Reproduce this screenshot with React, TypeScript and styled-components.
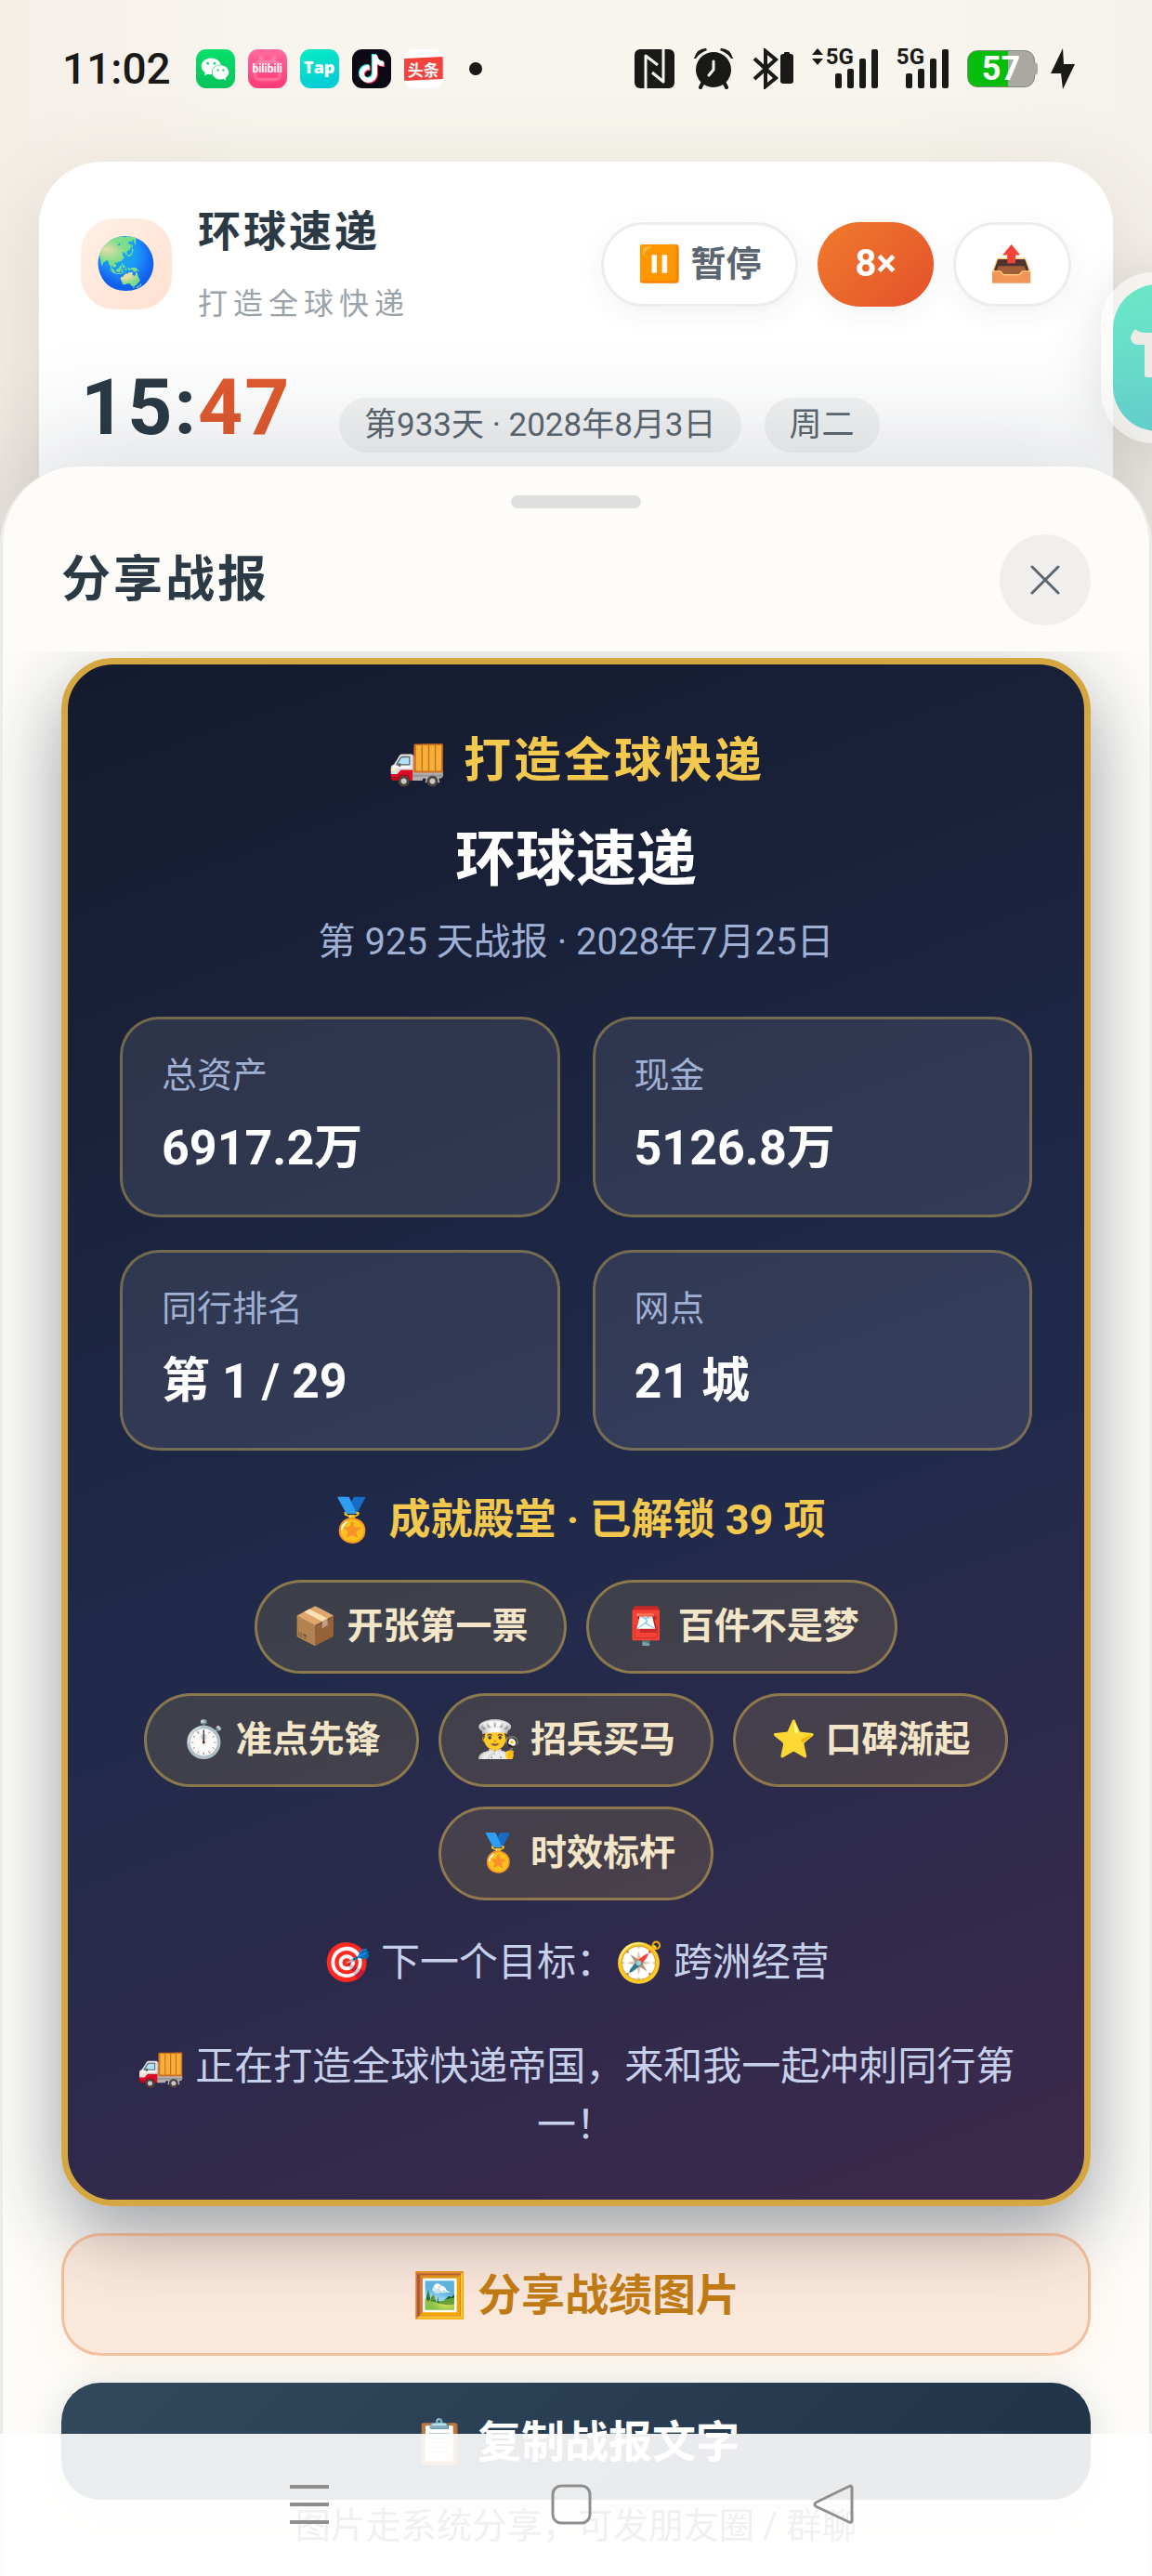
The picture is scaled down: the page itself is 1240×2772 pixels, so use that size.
import React from 'react';
import styled, { createGlobalStyle, css } from 'styled-components';
import { FaWeixin, FaTiktok } from 'react-icons/fa';
import { SiBilibili } from 'react-icons/si';

const Global = createGlobalStyle`
  *, *::before, *::after { box-sizing: border-box; }
  body {
    margin: 0;
    font-family: Roboto, "Noto Sans CJK SC", "Noto Color Emoji", sans-serif;
    color: #2b3a44;
    background: #f5f1ea;
  }
  h1, h2, h3, p, dl, dt, dd, ul { margin: 0; padding: 0; }
  button { font-family: inherit; margin: 0; cursor: pointer; }
`;

const Page = styled.div`
  position: relative;
  display: flex;
  flex-direction: column;
  min-height: 100vh;
  overflow: hidden;
  background: linear-gradient(90deg, #f5efe8 0, #f8f5ee 22%, #f8f5ee 78%, #f5f1eb 100%);
`;

/* ---------- status bar ---------- */

const StatusBar = styled.header`
  display: flex;
  align-items: center;
  justify-content: space-between;
  padding: 44px 83px 0 67px;
  height: 104px;
  flex: none;
  color: #191917;
`;

const StatusGroup = styled.div<{ $gap: number }>`
  display: flex;
  align-items: center;
  gap: ${(p) => p.$gap}px;
`;

const SystemTime = styled.time`
  font-size: 46px;
  font-weight: 500;
  line-height: 60px;
  margin-right: 13px;
`;

const AppIcon = styled.span<{ $bg: string }>`
  position: relative;
  display: flex;
  align-items: center;
  justify-content: center;
  width: 42px;
  height: 42px;
  border-radius: 11px;
  overflow: hidden;
  color: #fff;
  background: ${(p) => p.$bg};
`;

const BiliText = styled.span`
  position: absolute;
  font-size: 12px;
  font-weight: 700;
`;

const TapText = styled.span`
  font-family: "Open Sans", sans-serif;
  font-size: 18px;
  font-weight: 800;
  line-height: 38px;
  align-self: flex-start;
`;

const ToutiaoBand = styled.span`
  display: flex;
  align-items: center;
  justify-content: center;
  width: 100%;
  height: 26px;
  background: #f5413e;
  clip-path: polygon(0 8%, 100% 0, 100% 92%, 0 100%);
  font-size: 17px;
  font-weight: 700;
`;

const Dot = styled.span`
  width: 14px;
  height: 14px;
  margin-left: 14px;
  border-radius: 50%;
  background: #191917;
`;

const Signal = styled.span`
  display: flex;
  align-items: flex-start;
  height: 44px;
`;

const SignalLabel = styled.span`
  font-size: 24px;
  font-weight: 700;
  line-height: 18px;
  margin-right: -20px;
`;

const Battery = styled.span`
  position: relative;
  display: flex;
  align-items: center;
  justify-content: center;
  width: 73px;
  height: 40px;
  margin-right: -3px;
  border: 1px solid #7d8a78;
  border-radius: 11px;
  background: linear-gradient(90deg, #07bd0c 60%, #a9a8a2 60%);
  color: #fff;
  font-size: 36px;
  font-weight: 700;
  line-height: 38px;

  &::after {
    content: "";
    position: absolute;
    left: 100%;
    width: 4px;
    height: 14px;
    border-radius: 0 4px 4px 0;
    background: #a9a8a2;
  }
`;

/* ---------- game header ---------- */

const GameCard = styled.section`
  margin: 70px 42px 0;
  padding: 40px 45px 104px;
  border-radius: 68px 68px 0 0;
  background: #fff;
  box-shadow: 0 24px 100px rgba(90, 75, 50, 0.16);
`;

const GameTop = styled.div`
  display: flex;
  align-items: center;
  height: 140px;
`;

const GameLogo = styled.div`
  display: flex;
  align-items: center;
  justify-content: center;
  width: 98px;
  height: 98px;
  border-radius: 36px;
  background: linear-gradient(135deg, #fff0e6, #ffe0d0);
  font-size: 54px;
  line-height: 64px;
`;

const GameNames = styled.div`
  margin-left: 28px;
  flex: 1;
`;

const GameName = styled.h1`
  font-size: 46px;
  font-weight: 700;
  line-height: 64px;
  letter-spacing: 3px;
`;

const GameTagline = styled.p`
  margin-top: 22px;
  font-size: 32px;
  line-height: 48px;
  letter-spacing: 6px;
  color: #9aa3a9;
`;

const GameActions = styled.div`
  display: flex;
  gap: 21px;
`;

const PillButton = styled.button<{ $active?: boolean }>`
  display: flex;
  align-items: center;
  justify-content: center;
  height: 91px;
  padding: 0 37px;
  border: 3px solid #eceeee;
  border-radius: 46px;
  background: #fff;
  box-shadow: 0 8px 28px rgba(40, 50, 60, 0.06);
  color: #5b6670;
  font-size: 38px;
  font-weight: 700;
  line-height: 48px;

  ${(p) => p.$active && css`
    border-color: transparent;
    background: linear-gradient(135deg, #f07b2c, #e4502c) border-box;
    color: #fff;
    font-size: 40px;
  `}
`;

const ClockRow = styled.div`
  display: flex;
  align-items: flex-end;
  margin-top: 34px;
  height: 99px;
`;

const Clock = styled.time`
  width: 278px;
  font-size: 84px;
  font-weight: 700;
  line-height: 96px;
  letter-spacing: 2px;
`;

const Minutes = styled.span`
  color: #e0592e;
`;

const DateChip = styled.span`
  margin-right: 25px;
  padding: 0 27px;
  border-radius: 30px;
  background: #f2f3f3;
  color: #5b6670;
  font-size: 35px;
  line-height: 59px;
`;

/* ---------- floating shortcut ---------- */

const FloatingTap = styled.button`
  position: absolute;
  top: 293px;
  right: -129px;
  width: 184px;
  height: 184px;
  padding: 13px;
  border: 0;
  border-radius: 56px;
  background: rgba(250, 250, 249, 0.6);
  box-shadow: 0 8px 60px rgba(0, 0, 0, 0.12);
`;

const FloatingTapFace = styled.span`
  display: block;
  height: 158px;
  border-radius: 48px;
  background: linear-gradient(165deg, #6ae8c5, #66cdd2);
`;

/* ---------- share sheet ---------- */

const Sheet = styled.main`
  position: relative;
  display: flex;
  flex: 1;
  flex-direction: column;
  margin-top: -89px;
  border: 3px solid #ebebea;
  border-width: 0 3px;
  border-radius: 84px 84px 0 0;
  background: #fdfcf8;
  box-shadow: 0 -24px 120px rgba(30, 45, 60, 0.16);
`;

const Handle = styled.div`
  align-self: center;
  width: 140px;
  height: 14px;
  margin-top: 31px;
  border-radius: 7px;
  background: #dfdfdf;
`;

const SheetHeader = styled.div`
  display: flex;
  align-items: center;
  justify-content: space-between;
  padding: 28px 63px;
`;

const SheetTitle = styled.h2`
  font-size: 53px;
  font-weight: 700;
  line-height: 80px;
  letter-spacing: 3px;
`;

const CloseButton = styled.button`
  display: flex;
  align-items: center;
  justify-content: center;
  width: 98px;
  height: 98px;
  padding: 0;
  border: 0;
  border-radius: 50%;
  background: #f0efee;
`;

const SheetBody = styled.div`
  flex: 1;
  padding: 7px 63px 24px;
  overflow: hidden;
`;

const ReportCard = styled.article`
  padding: 64px 56px 49px;
  border: 7px solid #d5a742;
  border-radius: 56px;
  background: linear-gradient(160deg, #151b2e 0%, #202a4b 55%, #3d2a4c 100%);
  box-shadow: 0 30px 84px rgba(20, 28, 50, 0.42);
  text-align: center;
`;

const CardBrand = styled.p`
  color: #f2c84f;
  font-size: 51px;
  font-weight: 700;
  line-height: 80px;
  letter-spacing: 3px;
`;

const CardName = styled.h3`
  margin-top: 18px;
  color: #fff;
  font-size: 65px;
  font-weight: 700;
  line-height: 96px;
`;

const CardDate = styled.p`
  margin-top: 13px;
  color: #a0b0d4;
  font-size: 40px;
  line-height: 56px;
`;

const Stats = styled.dl`
  display: grid;
  grid-template-columns: 1fr 1fr;
  gap: 35px;
  margin-top: 52px;
  text-align: left;
`;

const Stat = styled.div`
  padding: 36px 42px 35px;
  border: 3px solid rgba(242, 200, 79, 0.36);
  border-radius: 42px;
  background: rgba(255, 255, 255, 0.09);
`;

const StatLabel = styled.dt`
  color: #9fb0d3;
  font-size: 38px;
  line-height: 48px;
`;

const StatValue = styled.dd`
  margin-top: 19px;
  color: #fff;
  font-size: 52px;
  font-weight: 700;
  line-height: 72px;
`;

const HallTitle = styled.p`
  margin-top: 42px;
  color: #f2c84f;
  font-size: 45px;
  font-weight: 700;
  line-height: 66px;
`;

const Badges = styled.ul`
  display: flex;
  flex-wrap: wrap;
  justify-content: center;
  gap: 21px;
  margin-top: 31px;
  list-style: none;
`;

const Badge = styled.li`
  padding: 0 38px;
  border: 3px solid rgba(242, 200, 79, 0.42);
  border-radius: 51px;
  background: rgba(242, 200, 79, 0.14);
  color: #f3e6c8;
  font-size: 39px;
  font-weight: 600;
  line-height: 95px;
`;

const Goal = styled.p`
  margin-top: 35px;
  color: #c7d0ea;
  font-size: 42px;
  line-height: 63px;
`;

const Promo = styled.p`
  margin-top: 49px;
  color: #c7d0ea;
  font-size: 42px;
  line-height: 63px;
`;

const ActionButton = styled.button<{ $dark?: boolean }>`
  display: block;
  width: 100%;
  height: 132px;
  margin-top: 29px;
  padding: 0 0 8px;
  border: 3px solid rgba(232, 130, 70, 0.42);
  border-radius: 42px;
  background: rgba(244, 150, 95, 0.18);
  box-shadow: 0 8px 40px rgba(244, 140, 80, 0.1);
  color: #c07a15;
  font-size: 47px;
  font-weight: 700;

  ${(p) => p.$dark && css`
    height: 126px;
    border: 0;
    background: linear-gradient(135deg, #32495d, #1f3248);
    box-shadow: 0 8px 40px rgba(31, 50, 72, 0.16);
    color: #fff;
  `}
`;

const Hint = styled.p`
  color: #5b6670;
  font-size: 38px;
  line-height: 56px;
  text-align: center;
`;

/* ---------- system navigation ---------- */

const SystemNav = styled.nav`
  position: fixed;
  right: 0;
  bottom: 0;
  left: 0;
  display: flex;
  justify-content: center;
  gap: 222px;
  height: 153px;
  padding: 47px 10px 0 0;
  background: rgba(255, 255, 255, 0.9);
`;

const NavButton = styled.button`
  width: 60px;
  height: 60px;
  padding: 0;
  border: 0;
  background: none;
`;

const stats = [
  ['总资产', '6917.2万'],
  ['现金', '5126.8万'],
  ['同行排名', '第 1 / 29'],
  ['网点', '21 城'],
];

const badges = ['📦 开张第一票', '📮 百件不是梦', '⏱️ 准点先锋', '👨‍🍳 招兵买马', '⭐ 口碑渐起', '🏅 时效标杆'];

function SignalBars() {
  return (
    <svg width="46" height="44" viewBox="0 0 46 44" fill="#191917">
      <rect x="0" y="27" width="7" height="16" rx="2" />
      <rect x="13" y="22" width="7" height="21" rx="2" />
      <rect x="26" y="11" width="7" height="32" rx="2" />
      <rect x="39" y="1" width="7" height="42" rx="2" />
    </svg>
  );
}

export default function App() {
  return (
    <Page>
      <Global />
      <StatusBar>
        <StatusGroup $gap={14}>
          <SystemTime>11:02</SystemTime>
          <AppIcon $bg="linear-gradient(#07df6c, #07c45b)"><FaWeixin size={31} /></AppIcon>
          <AppIcon $bg="linear-gradient(#ff6a9c, #ff3a78)">
            <SiBilibili size={30} opacity={0.2} />
            <BiliText>bilibili</BiliText>
          </AppIcon>
          <AppIcon $bg="linear-gradient(160deg, #07ecc0, #05c8dc)"><TapText>Tap</TapText></AppIcon>
          <AppIcon $bg="#0b0914">
            <svg width="32" height="34" viewBox="0 0 32 34">
              <FaTiktok x="0" y="1" size={30} color="#25f4ee" />
              <FaTiktok x="2" y="3" size={30} color="#fe2c55" />
              <FaTiktok x="1" y="2" size={30} color="#fff" />
            </svg>
          </AppIcon>
          <AppIcon $bg="#fff"><ToutiaoBand>头条</ToutiaoBand></AppIcon>
          <Dot />
        </StatusGroup>
        <StatusGroup $gap={20}>
          <svg width="43" height="44" viewBox="0 0 43 44">
            <rect y="1" width="43" height="42" rx="6" fill="#191917" />
            <path d="M12 44V8L25 18M31 1V36L19 26" fill="none" stroke="#f6f3ec" strokeWidth="3" strokeLinejoin="round" />
          </svg>
          <svg width="44" height="44" viewBox="0 0 44 44" fill="#191917">
            <circle cx="22" cy="23" r="19" />
            <path d="M1 11Q4 0 14 0L15 2Q7 5 3 11ZM43 11Q40 0 30 0L29 2Q37 5 41 11Z" />
            <path d="M11 36L8 42M33 36L36 42" stroke="#191917" strokeWidth="4" strokeLinecap="round" />
            <path d="M22 14v9l-5 6" fill="none" stroke="#f6f3ec" strokeWidth="3" strokeLinecap="round" />
          </svg>
          <svg width="44" height="44" viewBox="0 0 44 44" fill="none" stroke="#191917">
            <path d="M2 11L25 32L14 41V3L25 12L2 33" strokeWidth="4" />
            <rect x="30" y="6" width="14" height="32" rx="3" fill="#191917" stroke="none" />
            <rect x="34" y="4" width="6" height="5" rx="1" fill="#191917" stroke="none" />
          </svg>
          <Signal>
            <svg width="15" height="18" viewBox="0 0 15 18" fill="#191917"><path d="M0 7L6 0L12 7ZM0 11H12L6 18Z" /></svg>
            <SignalLabel>5G</SignalLabel>
            <SignalBars />
          </Signal>
          <Signal>
            <SignalLabel>5G</SignalLabel>
            <SignalBars />
          </Signal>
          <Battery>57</Battery>
          <svg width="26" height="44" viewBox="0 0 26 44" fill="#191917"><path d="M13 0L0 27H11L13 44L26 17H14Z" /></svg>
        </StatusGroup>
      </StatusBar>

      <GameCard>
        <GameTop>
          <GameLogo>🌏</GameLogo>
          <GameNames>
            <GameName>环球速递</GameName>
            <GameTagline>打造全球快递</GameTagline>
          </GameNames>
          <GameActions>
            <PillButton>⏸️ 暂停</PillButton>
            <PillButton $active>8×</PillButton>
            <PillButton aria-label="分享">📤</PillButton>
          </GameActions>
        </GameTop>
        <ClockRow>
          <Clock>15:<Minutes>47</Minutes></Clock>
          <DateChip>第933天 · 2028年8月3日</DateChip>
          <DateChip>周二</DateChip>
        </ClockRow>
      </GameCard>

      <FloatingTap aria-label="TapTap">
        <FloatingTapFace>
          <svg width="158" height="158" viewBox="0 0 158 158" fill="#ecebe8">
            <path d="M24 48Q28 52 34 52H80V65H50V98Q50 100 48 100H36Q34 100 34 98V65H27Q19 64 19 57Q20 52 24 48Z" />
          </svg>
        </FloatingTapFace>
      </FloatingTap>

      <Sheet>
        <Handle />
        <SheetHeader>
          <SheetTitle>分享战报</SheetTitle>
          <CloseButton aria-label="关闭">
            <svg width="32" height="32" viewBox="0 0 32 32" stroke="#5b6670" strokeWidth="3" strokeLinecap="round">
              <path d="M2 2L30 30M30 2L2 30" />
            </svg>
          </CloseButton>
        </SheetHeader>
        <SheetBody>
          <ReportCard>
            <CardBrand>🚚 打造全球快递</CardBrand>
            <CardName>环球速递</CardName>
            <CardDate>第 925 天战报 · 2028年7月25日</CardDate>
            <Stats>
              {stats.map(([label, value]) => (
                <Stat key={label}>
                  <StatLabel>{label}</StatLabel>
                  <StatValue>{value}</StatValue>
                </Stat>
              ))}
            </Stats>
            <HallTitle>🏅 成就殿堂 · 已解锁 39 项</HallTitle>
            <Badges>
              {badges.map((b) => <Badge key={b}>{b}</Badge>)}
            </Badges>
            <Goal>🎯 下一个目标：🧭 跨洲经营</Goal>
            <Promo>🚚 正在打造全球快递帝国，来和我一起冲刺同行第一！</Promo>
          </ReportCard>
          <ActionButton>🖼️ 分享战绩图片</ActionButton>
          <ActionButton $dark>📋 复制战报文字</ActionButton>
          <Hint>图片走系统分享，可发朋友圈 / 群聊</Hint>
        </SheetBody>
      </Sheet>

      <SystemNav>
        <NavButton aria-label="最近任务">
          <svg width="44" height="44" viewBox="0 0 44 44" stroke="#8f8f90" strokeWidth="4"><path d="M1 3H43M1 22H43M1 41H43" /></svg>
        </NavButton>
        <NavButton aria-label="主屏幕">
          <svg width="44" height="44" viewBox="0 0 44 44" fill="none" stroke="#8f8f90" strokeWidth="3"><rect x="2" y="2" width="40" height="40" rx="9" /></svg>
        </NavButton>
        <NavButton aria-label="返回">
          <svg width="44" height="44" viewBox="0 0 44 44" fill="none" stroke="#8f8f90" strokeWidth="3" strokeLinejoin="round"><path d="M40 2Q42 2 42 5V39Q42 42 39 41L3 24Q1 22 3 20Z" /></svg>
        </NavButton>
      </SystemNav>
    </Page>
  );
}
